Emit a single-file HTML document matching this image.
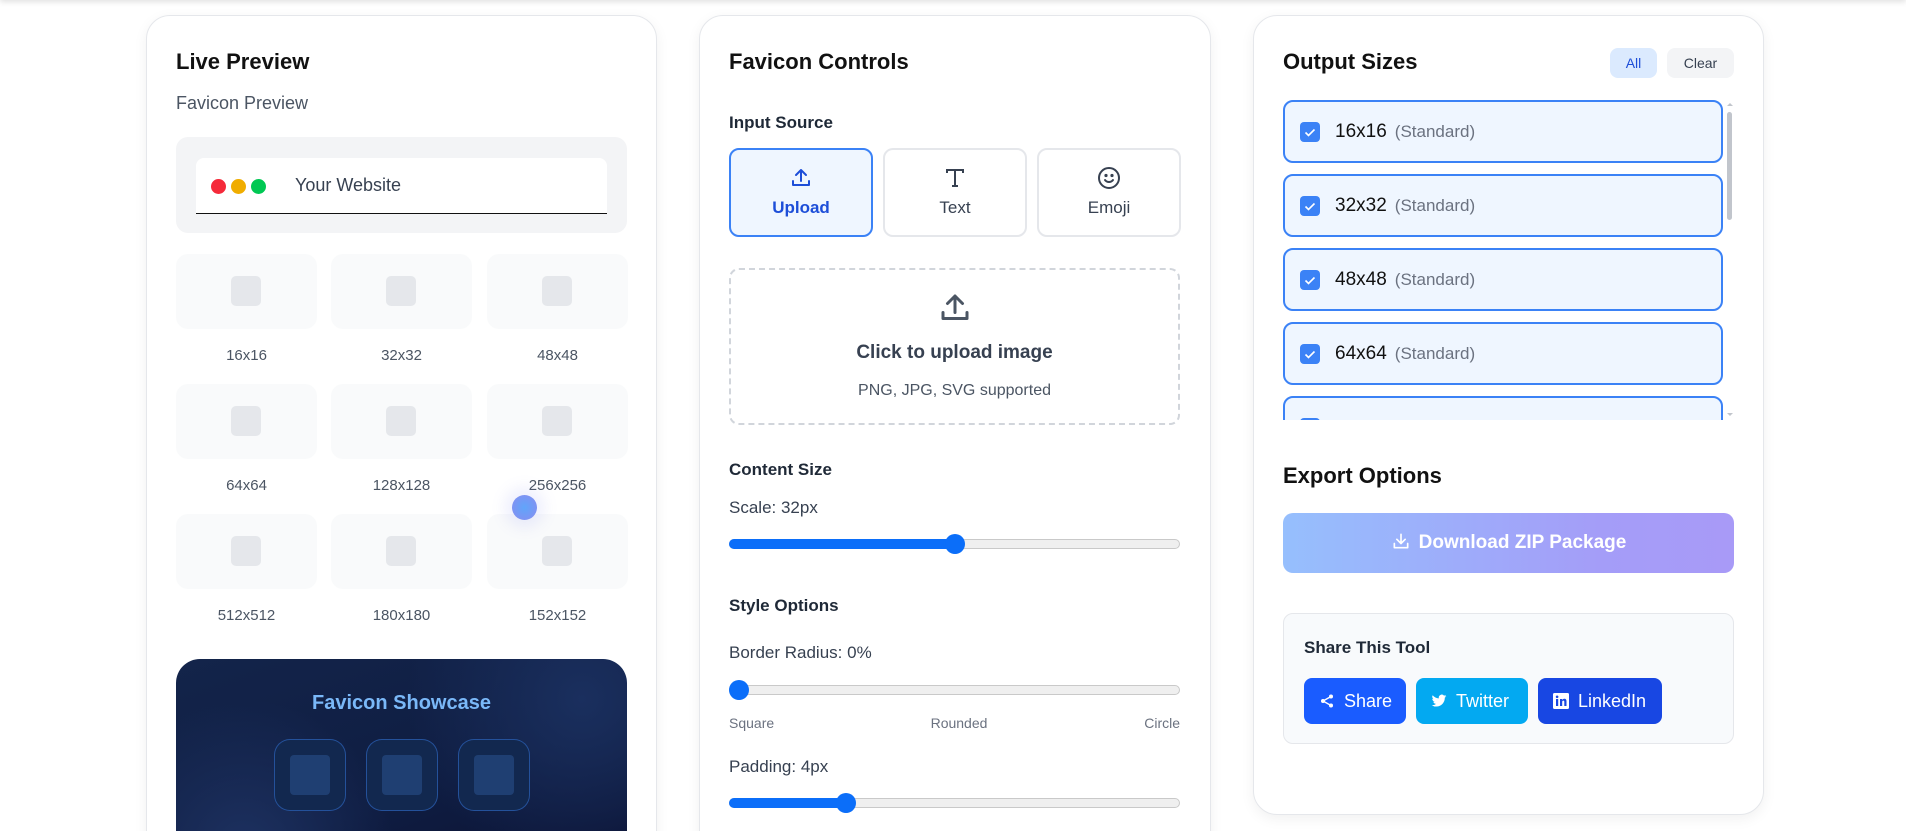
<!DOCTYPE html>
<html style="height:831px;overflow:hidden"><head><meta charset="utf-8"><style>
*{box-sizing:border-box;margin:0;padding:0}
body{width:1906px;height:831px;overflow:hidden;background:#fff;font-family:"Liberation Sans",Arial,sans-serif;position:relative;color:#111827}
.topbar{position:absolute;left:0;top:-10px;width:1906px;height:10px;box-shadow:0 2px 6px rgba(0,0,0,.12)}
.card{position:absolute;top:15px;background:#fff;border:1px solid #e5e7eb;border-radius:24px;box-shadow:0 4px 14px rgba(0,0,0,.06)}
.a{position:absolute}
.h2{font-size:22px;font-weight:700;color:#111;line-height:26px}
.h3{font-size:17px;font-weight:700;color:#1f2937;line-height:20px}
.lbl{font-size:17px;color:#374151;line-height:20px}
.tile{position:absolute;width:141px;height:75px;background:#f9fafb;border-radius:12px}
.tile i{position:absolute;left:55px;top:22px;width:30px;height:30px;background:#e5e7eb;border-radius:5px}
.tl{position:absolute;width:141px;text-align:center;font-size:15px;color:#4b5563}
.track{position:absolute;left:729px;width:451px;height:10px;background:#efefef;border:1px solid #c9c9c9;border-radius:5px}
.fill{position:absolute;left:729px;height:10px;background:#0b6ef9;border-radius:5px}
.thumb{position:absolute;width:20px;height:20px;border-radius:50%;background:#0b6ef9}
.btn{position:absolute;top:148px;width:144px;height:89px;border:2px solid #e5e7eb;border-radius:10px;background:#fff;text-align:center;color:#374151;font-size:17px}
.btn svg{position:absolute;left:58px;top:16px}
.btn span{position:absolute;left:0;right:0;top:48px}
.item{position:absolute;left:1283px;width:440px;height:63px;border:2px solid #3b82f6;border-radius:10px;background:#eff6ff}
.cb{position:absolute;left:15px;top:20px;width:20px;height:20px;background:#3b82f6;border-radius:4px}
.item b{position:absolute;left:50px;top:19px;font-size:19px;font-weight:500;color:#111}
.item em{font-style:normal;font-size:17px;color:#6b7280;font-weight:400;margin-left:8px}
.sb{position:absolute;top:678px;height:46px;border-radius:8px;color:#fff;font-size:18px;line-height:46px}
</style></head><body>
<div class="topbar"></div>

<!-- LEFT CARD -->
<div class="card" style="left:146px;width:511px;height:900px"></div>
<div class="a h2" style="left:176px;top:49px">Live Preview</div>
<div class="a" style="left:176px;top:93px;font-size:18px;color:#4b5563">Favicon Preview</div>
<div class="a" style="left:176px;top:137px;width:451px;height:96px;background:#f3f4f6;border-radius:12px"></div>
<div class="a" style="left:196px;top:158px;width:411px;height:56px;background:#fff;border-radius:8px 8px 0 0;border-bottom:1.5px solid #111"></div>
<div class="a" style="left:211px;top:179px;width:15px;height:15px;border-radius:50%;background:#f52a3a"></div>
<div class="a" style="left:231px;top:179px;width:15px;height:15px;border-radius:50%;background:#f0ad00"></div>
<div class="a" style="left:251px;top:179px;width:15px;height:15px;border-radius:50%;background:#00c853"></div>
<div class="a" style="left:295px;top:175px;font-size:18px;color:#374151">Your Website</div>

<div class="tile" style="left:176px;top:254px"><i></i></div>
<div class="tile" style="left:331px;top:254px"><i></i></div>
<div class="tile" style="left:487px;top:254px"><i></i></div>
<div class="tl" style="left:176px;top:347px">16x16</div>
<div class="tl" style="left:331px;top:347px">32x32</div>
<div class="tl" style="left:487px;top:347px">48x48</div>
<div class="tile" style="left:176px;top:384px"><i></i></div>
<div class="tile" style="left:331px;top:384px"><i></i></div>
<div class="tile" style="left:487px;top:384px"><i></i></div>
<div class="tl" style="left:176px;top:477px">64x64</div>
<div class="tl" style="left:331px;top:477px">128x128</div>
<div class="tl" style="left:487px;top:477px">256x256</div>
<div class="tile" style="left:176px;top:514px"><i></i></div>
<div class="tile" style="left:331px;top:514px"><i></i></div>
<div class="tile" style="left:487px;top:514px"><i></i></div>
<div class="tl" style="left:176px;top:607px">512x512</div>
<div class="tl" style="left:331px;top:607px">180x180</div>
<div class="tl" style="left:487px;top:607px">152x152</div>

<div class="a" style="left:512px;top:495px;width:25px;height:25px;border-radius:50%;background:radial-gradient(circle,#60a5fa,#8b8cf0);box-shadow:0 0 14px 8px rgba(120,130,240,.12)"></div>

<div class="a" style="left:176px;top:659px;width:451px;height:200px;border-radius:24px;background:radial-gradient(circle at 90% 20%,#1a2f5e 0,transparent 40%),radial-gradient(circle at 15% 95%,#1d3160 0,transparent 35%),linear-gradient(160deg,#13244a,#0f1d42 60%,#0b1233)"></div>
<div class="a" style="left:176px;top:692px;width:451px;text-align:center;font-size:20px;font-weight:700;color:#7ab8f8">Favicon Showcase</div>
<div class="a" style="left:274px;top:739px;width:72px;height:72px;border:1px solid rgba(59,130,246,.45);border-radius:16px;background:#12284f"><div style="margin:15px;width:40px;height:40px;border-radius:4px;background:#1f3f72"></div></div>
<div class="a" style="left:366px;top:739px;width:72px;height:72px;border:1px solid rgba(59,130,246,.45);border-radius:16px;background:#12284f"><div style="margin:15px;width:40px;height:40px;border-radius:4px;background:#1f3f72"></div></div>
<div class="a" style="left:458px;top:739px;width:72px;height:72px;border:1px solid rgba(59,130,246,.45);border-radius:16px;background:#12284f"><div style="margin:15px;width:40px;height:40px;border-radius:4px;background:#1f3f72"></div></div>

<!-- MIDDLE CARD -->
<div class="card" style="left:699px;width:512px;height:900px"></div>
<div class="a h2" style="left:729px;top:49px">Favicon Controls</div>
<div class="a h3" style="left:729px;top:113px;font-weight:600">Input Source</div>
<div class="btn" style="left:729px;border-color:#3b82f6;background:#eff6ff;color:#1d4ed8;font-weight:600">
<svg width="24" height="24" viewBox="0 0 24 24" fill="none" stroke="#1d4ed8" stroke-width="2" stroke-linecap="round" stroke-linejoin="round"><path d="M4 15v4h16v-4M12 15V4M7 9l5-5 5 5"/></svg><span>Upload</span></div>
<div class="btn" style="left:883px"><svg width="24" height="24" viewBox="0 0 24 24" fill="none" stroke="#374151" stroke-width="2"><path d="M4 7V4h16v3M12 4v16M9 20h6"/></svg><span>Text</span></div>
<div class="btn" style="left:1037px"><svg width="24" height="24" viewBox="0 0 24 24" fill="none" stroke="#374151" stroke-width="2" stroke-linecap="round"><circle cx="12" cy="12" r="10"/><path d="M8 14s1.5 2 4 2 4-2 4-2"/><circle cx="9" cy="9.5" r=".6" fill="#374151"/><circle cx="15" cy="9.5" r=".6" fill="#374151"/></svg><span>Emoji</span></div>

<div class="a" style="left:729px;top:268px;width:451px;height:157px;border:2px dashed #d1d5db;border-radius:10px"></div>
<svg class="a" style="left:937px;top:290px" width="36" height="36" viewBox="0 0 24 24" fill="none" stroke="#4b5563" stroke-width="2" stroke-linecap="round" stroke-linejoin="round"><path d="M4 15v4h16v-4M12 15V4M7 9l5-5 5 5"/></svg>
<div class="a" style="left:729px;top:342px;width:451px;text-align:center;font-size:19px;font-weight:600;color:#374151">Click to upload image</div>
<div class="a" style="left:729px;top:382px;width:451px;text-align:center;font-size:16px;color:#4b5563">PNG, JPG, SVG supported</div>

<div class="a h3" style="left:729px;top:460px;font-weight:600">Content Size</div>
<div class="a lbl" style="left:729px;top:498px">Scale: 32px</div>
<div class="track" style="top:539px"></div><div class="fill" style="top:539px;width:225px"></div><div class="thumb" style="left:945px;top:534px"></div>
<div class="a h3" style="left:729px;top:596px;font-weight:600">Style Options</div>
<div class="a lbl" style="left:729px;top:643px">Border Radius: 0%</div>
<div class="track" style="top:685px"></div><div class="thumb" style="left:729px;top:680px"></div>
<div class="a" style="left:729px;top:715px;font-size:14px;color:#6b7280">Square</div>
<div class="a" style="left:929px;top:715px;width:60px;text-align:center;font-size:14px;color:#6b7280">Rounded</div>
<div class="a" style="left:1120px;top:715px;width:60px;text-align:right;font-size:14px;color:#6b7280">Circle</div>
<div class="a lbl" style="left:729px;top:757px">Padding: 4px</div>
<div class="track" style="top:798px"></div><div class="fill" style="top:798px;width:118px"></div><div class="thumb" style="left:836px;top:793px"></div>

<!-- RIGHT CARD -->
<div class="card" style="left:1253px;width:511px;height:800px"></div>
<div class="a h2" style="left:1283px;top:49px">Output Sizes</div>
<div class="a" style="left:1610px;top:48px;width:47px;height:30px;background:#dbeafe;border-radius:8px;color:#1d4ed8;font-size:14px;text-align:center;line-height:30px">All</div>
<div class="a" style="left:1667px;top:48px;width:67px;height:30px;background:#f3f4f6;border-radius:8px;color:#374151;font-size:14px;text-align:center;line-height:30px">Clear</div>
<div class="a" style="left:1280px;top:98px;width:460px;height:322px;overflow:hidden">
<div class="item" style="left:3px;top:2px"><div class="cb"><svg width="20" height="20" viewBox="0 0 20 20"><path d="M5.5 10.5l3 3 6-6" fill="none" stroke="#fff" stroke-width="1.6"/></svg></div><b>16x16<em>(Standard)</em></b></div>
<div class="item" style="left:3px;top:76px"><div class="cb"><svg width="20" height="20" viewBox="0 0 20 20"><path d="M5.5 10.5l3 3 6-6" fill="none" stroke="#fff" stroke-width="1.6"/></svg></div><b>32x32<em>(Standard)</em></b></div>
<div class="item" style="left:3px;top:150px"><div class="cb"><svg width="20" height="20" viewBox="0 0 20 20"><path d="M5.5 10.5l3 3 6-6" fill="none" stroke="#fff" stroke-width="1.6"/></svg></div><b>48x48<em>(Standard)</em></b></div>
<div class="item" style="left:3px;top:224px"><div class="cb"><svg width="20" height="20" viewBox="0 0 20 20"><path d="M5.5 10.5l3 3 6-6" fill="none" stroke="#fff" stroke-width="1.6"/></svg></div><b>64x64<em>(Standard)</em></b></div>
<div class="item" style="left:3px;top:298px"><div class="cb"></div></div>
</div>
<div class="a" style="left:1727px;top:112px;width:5px;height:108px;background:#c1c5cc;border-radius:3px"></div>
<div class="a" style="left:1727px;top:103px;width:0;height:0;border-left:3px solid transparent;border-right:3px solid transparent;border-bottom:3px solid #c1c5cc"></div>
<div class="a" style="left:1727px;top:413px;width:0;height:0;border-left:3px solid transparent;border-right:3px solid transparent;border-top:3px solid #c1c5cc"></div>

<div class="a h2" style="left:1283px;top:463px">Export Options</div>
<div class="a" style="left:1283px;top:513px;width:451px;height:60px;border-radius:10px;background:linear-gradient(90deg,#96bffd,#a49df8 70%,#a89af7);color:#fff;font-size:19px;font-weight:700;text-align:center;line-height:60px">
<svg style="vertical-align:-3px;margin-right:8px" width="20" height="20" viewBox="0 0 24 24" fill="none" stroke="#fff" stroke-width="2" stroke-linecap="round" stroke-linejoin="round"><path d="M4 15v5h16v-5M12 4v11M7 10l5 5 5-5"/></svg>Download ZIP Package</div>

<div class="a" style="left:1283px;top:613px;width:451px;height:131px;background:#f8fafc;border:1px solid #e5e7eb;border-radius:10px"></div>
<div class="a h3" style="left:1304px;top:638px">Share This Tool</div>
<div class="sb" style="left:1304px;width:102px;background:#1a5cff"><svg style="position:absolute;left:16px;top:16px" width="14" height="14" viewBox="0 0 14 14" fill="#fff"><circle cx="11" cy="2.5" r="2"/><circle cx="3" cy="7" r="2"/><circle cx="11" cy="11.5" r="2"/><path d="M11 2.5L3 7l8 4.5" stroke="#fff" stroke-width="1.4" fill="none"/></svg><span style="position:absolute;left:40px">Share</span></div>
<div class="sb" style="left:1416px;width:112px;background:#03a9f1"><svg style="position:absolute;left:15px;top:15px" width="16" height="16" viewBox="0 0 24 24" fill="#fff"><path d="M23 4.6c-.8.4-1.7.6-2.6.7.9-.6 1.6-1.4 2-2.5-.9.5-1.9.9-2.9 1.1A4.5 4.5 0 0 0 11.8 8 12.8 12.8 0 0 1 2.5 3.3a4.5 4.5 0 0 0 1.4 6c-.7 0-1.4-.2-2-.6 0 2.2 1.5 4 3.6 4.5-.7.2-1.4.2-2 .1.6 1.8 2.2 3.1 4.200 3.1A9 9 0 0 1 1 18.3 12.8 12.8 0 0 0 7.9 20.3c8.3 0 12.8-6.9 12.8-12.8v-.6c.9-.6 1.7-1.400 2.3-2.3z"/></svg><span style="position:absolute;left:40px">Twitter</span></div>
<div class="sb" style="left:1538px;width:124px;background:#1847e3"><svg style="position:absolute;left:15px;top:15px" width="16" height="16" viewBox="0 0 16 16"><rect width="16" height="16" rx="1.5" fill="#fff"/><rect x="3" y="6" width="2.2" height="7" fill="#1847e3"/><circle cx="4.1" cy="3.8" r="1.3" fill="#1847e3"/><path d="M7 6h2.1v1c.4-.7 1.2-1.2 2.2-1.2 1.7 0 2.2 1 2.2 2.7V13h-2.2V9c0-.9-.2-1.4-1-1.4s-1.1.6-1.1 1.4v4H7z" fill="#1847e3"/></svg><span style="position:absolute;left:40px">LinkedIn</span></div>
</body></html>
